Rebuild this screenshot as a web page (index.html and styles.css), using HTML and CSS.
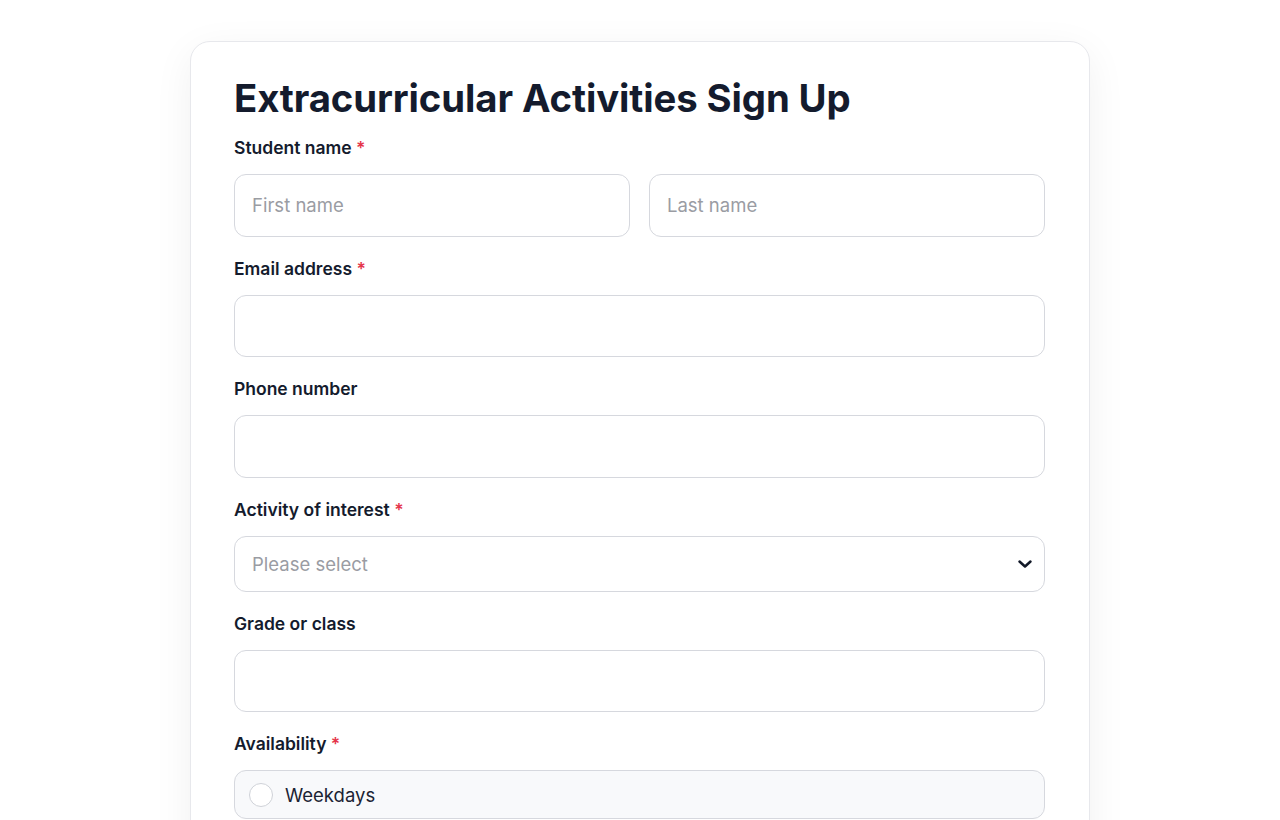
FILE: index.html
```html
<!DOCTYPE html>
<html lang="en">
<head>
<meta charset="utf-8">
<title>Extracurricular Activities Sign Up</title>
<link rel="stylesheet" href="styles.css">
</head>
<body>
<main class="page">
  <form class="card">
    <h1 class="title">Extracurricular Activities Sign Up</h1>

    <div class="field">
      <label class="label">Student name <span class="req">*</span></label>
      <div class="row">
        <input class="input" type="text" placeholder="First name">
        <input class="input" type="text" placeholder="Last name">
      </div>
    </div>

    <div class="field">
      <label class="label">Email address <span class="req">*</span></label>
      <input class="input" type="email">
    </div>

    <div class="field">
      <label class="label">Phone number</label>
      <input class="input" type="tel">
    </div>

    <div class="field">
      <label class="label">Activity of interest <span class="req">*</span></label>
      <div class="select">
        <span class="select-text">Please select</span>
        <svg class="chev" width="16" height="16" viewBox="0 0 16 16" fill="none"><path d="M2.5 5.5 8 10.5 13.5 5.5" stroke="#111827" stroke-width="2.5" stroke-linecap="round" stroke-linejoin="round"/></svg>
      </div>
    </div>

    <div class="field">
      <label class="label">Grade or class</label>
      <input class="input" type="text">
    </div>

    <div class="field">
      <label class="label">Availability <span class="req">*</span></label>
      <div class="option">
        <span class="radio"></span>
        <span class="option-text">Weekdays</span>
      </div>
    </div>
  </form>
</main>
</body>
</html>
```

FILE: styles.css
```css
* { box-sizing: border-box; }
html, body { margin: 0; padding: 0; background: #ffffff; }
body { font-family: Inter, "Noto Sans", sans-serif; color: #111827; }
.page { padding-top: 41px; display: flex; justify-content: center; }
.card {
  width: 900px;
  background: #ffffff;
  border: 1px solid #e7e8ec;
  border-radius: 20px;
  box-shadow: 0 10px 40px rgba(17, 24, 39, 0.06);
  padding: 32px 44px 40px 43px;
}
.title {
  margin: 0 0 14px;
  font-size: 38.3px;
  line-height: 48px;
  font-weight: 700;
  letter-spacing: -0.1px;
  color: #141b2d;
}
.field { margin-bottom: 20px; }
.label {
  display: block;
  font-size: 17.5px;
  line-height: 24px;
  font-weight: 600;
  color: #141b2d;
  margin-bottom: 14px;
}
.req { color: #e5364b; }
.row { display: flex; gap: 19px; }
.row .input { flex: 1; }
.input {
  display: block;
  width: 100%;
  height: 62.5px;
  border: 1px solid #d6d8de;
  border-radius: 12px;
  padding: 0 17px;
  font-family: inherit;
  font-size: 18.5px;
  color: #111827;
  background: #fff;
  outline: none;
}
.input::placeholder { color: #9a9ca3; }
.select {
  height: 56px;
  border: 1px solid #d6d8de;
  border-radius: 12px;
  padding: 0 11px 0 17px;
  display: flex;
  align-items: center;
  justify-content: space-between;
  background: #fff;
}
.select-text { font-size: 18.5px; color: #9a9ca3; }
.option {
  height: 49px;
  border: 1px solid #d6d8de;
  border-radius: 12px;
  background: #f8f9fb;
  display: flex;
  align-items: center;
  padding: 0 14px;
  gap: 12px;
}
.radio {
  width: 24px; height: 24px;
  border: 1px solid #cfd2d8;
  border-radius: 50%;
  background: #fff;
}
.option-text { font-size: 18.5px; color: #1b2333; }
```
